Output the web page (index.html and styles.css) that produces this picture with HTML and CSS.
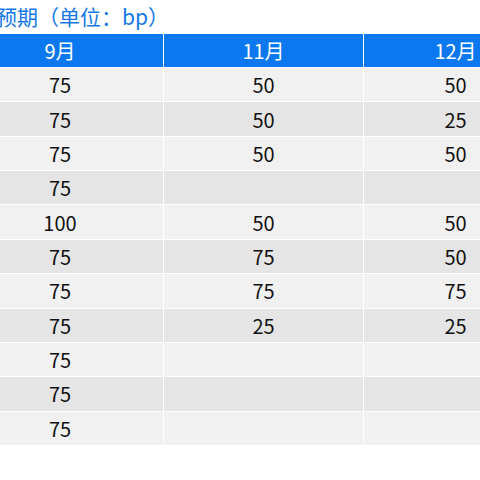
FILE: index.html
```html
<!DOCTYPE html>
<html lang="zh">
<head>
<meta charset="utf-8">
<link rel="stylesheet" href="styles.css">
</head>
<body>
<div class="page">
  <div class="title">预期（单位：bp）</div>
  <div class="grid">
    <div class="cell head c1">9月</div><div class="cell head c2">11月</div><div class="cell head c3">12月</div>
    <div class="cell odd c1">75</div><div class="cell odd c2">50</div><div class="cell odd c3">50</div>
    <div class="cell even c1">75</div><div class="cell even c2">50</div><div class="cell even c3">25</div>
    <div class="cell odd c1">75</div><div class="cell odd c2">50</div><div class="cell odd c3">50</div>
    <div class="cell even c1">75</div><div class="cell even c2"></div><div class="cell even c3"></div>
    <div class="cell odd c1">100</div><div class="cell odd c2">50</div><div class="cell odd c3">50</div>
    <div class="cell even c1">75</div><div class="cell even c2">75</div><div class="cell even c3">50</div>
    <div class="cell odd c1">75</div><div class="cell odd c2">75</div><div class="cell odd c3">75</div>
    <div class="cell even c1">75</div><div class="cell even c2">25</div><div class="cell even c3">25</div>
    <div class="cell odd c1">75</div><div class="cell odd c2"></div><div class="cell odd c3"></div>
    <div class="cell even c1">75</div><div class="cell even c2"></div><div class="cell even c3"></div>
    <div class="cell odd c1">75</div><div class="cell odd c2"></div><div class="cell odd c3"></div>
  </div>
</div>
</body>
</html>
```
FILE: styles.css
```css
html, body {
  margin: 0;
  padding: 0;
  background: #ffffff;
  overflow: hidden;
  width: 480px;
  height: 480px;
}
.page {
  font-family: "Noto Sans CJK SC", "Liberation Sans", sans-serif;
  width: 480px;
  overflow: hidden;
}
.title {
  height: 34px;
  line-height: 32px;
  font-size: 21px;
  color: #1479e6;
  margin-left: -4px;
  white-space: nowrap;
}
.grid {
  display: grid;
  grid-template-columns: 206px 199px 183px;
  grid-template-rows: 33px repeat(11, 33.36px);
  column-gap: 1px;
  row-gap: 1px;
  margin-left: -43px;
  width: 590px;
  background: #ffffff;
}
.cell {
  display: flex;
  align-items: center;
  justify-content: center;
  font-size: 20px;
  color: #111111;
}
.head {
  background: #0b78f0;
  color: #ffffff;
}
.odd {
  background: #f1f1f1;
}
.even {
  background: #e5e5e5;
}
```
